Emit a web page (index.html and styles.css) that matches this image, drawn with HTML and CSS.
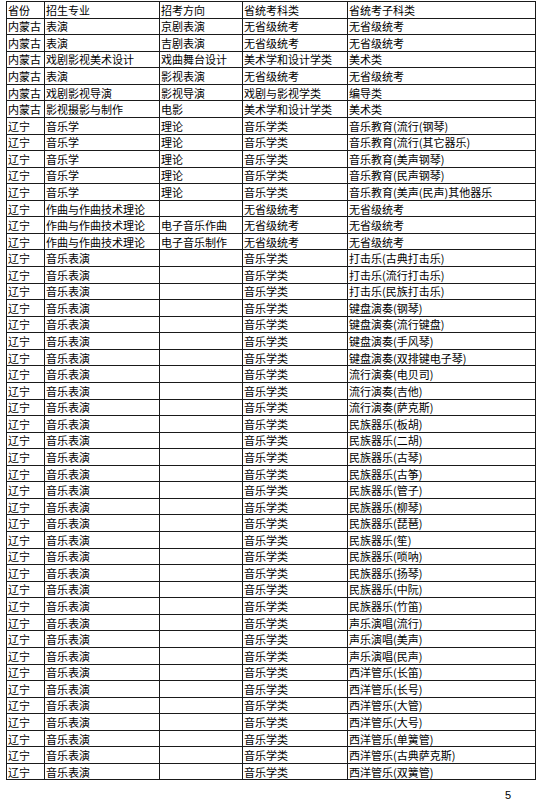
FILE: index.html
```html
<!DOCTYPE html>
<html lang="zh-CN">
<head>
<meta charset="utf-8">
<title>招生专业</title>
<link rel="stylesheet" href="styles.css">
</head>
<body>
<div class="page">
<table class="sheet">
<colgroup>
<col class="c1"><col class="c2"><col class="c3"><col class="c4"><col class="c5">
</colgroup>
<tbody>
<tr><td>省份</td><td>招生专业</td><td>招考方向</td><td>省统考科类</td><td>省统考子科类</td></tr>
<tr><td>内蒙古</td><td>表演</td><td>京剧表演</td><td>无省级统考</td><td>无省级统考</td></tr>
<tr><td>内蒙古</td><td>表演</td><td>吉剧表演</td><td>无省级统考</td><td>无省级统考</td></tr>
<tr><td>内蒙古</td><td>戏剧影视美术设计</td><td>戏曲舞台设计</td><td>美术学和设计学类</td><td>美术类</td></tr>
<tr><td>内蒙古</td><td>表演</td><td>影视表演</td><td>无省级统考</td><td>无省级统考</td></tr>
<tr><td>内蒙古</td><td>戏剧影视导演</td><td>影视导演</td><td>戏剧与影视学类</td><td>编导类</td></tr>
<tr><td>内蒙古</td><td>影视摄影与制作</td><td>电影</td><td>美术学和设计学类</td><td>美术类</td></tr>
<tr><td>辽宁</td><td>音乐学</td><td>理论</td><td>音乐学类</td><td>音乐教育(流行(钢琴)</td></tr>
<tr><td>辽宁</td><td>音乐学</td><td>理论</td><td>音乐学类</td><td>音乐教育(流行(其它器乐)</td></tr>
<tr><td>辽宁</td><td>音乐学</td><td>理论</td><td>音乐学类</td><td>音乐教育(美声钢琴)</td></tr>
<tr><td>辽宁</td><td>音乐学</td><td>理论</td><td>音乐学类</td><td>音乐教育(民声钢琴)</td></tr>
<tr><td>辽宁</td><td>音乐学</td><td>理论</td><td>音乐学类</td><td>音乐教育(美声(民声)其他器乐</td></tr>
<tr><td>辽宁</td><td>作曲与作曲技术理论</td><td></td><td>无省级统考</td><td>无省级统考</td></tr>
<tr><td>辽宁</td><td>作曲与作曲技术理论</td><td>电子音乐作曲</td><td>无省级统考</td><td>无省级统考</td></tr>
<tr><td>辽宁</td><td>作曲与作曲技术理论</td><td>电子音乐制作</td><td>无省级统考</td><td>无省级统考</td></tr>
<tr><td>辽宁</td><td>音乐表演</td><td></td><td>音乐学类</td><td>打击乐(古典打击乐)</td></tr>
<tr><td>辽宁</td><td>音乐表演</td><td></td><td>音乐学类</td><td>打击乐(流行打击乐)</td></tr>
<tr><td>辽宁</td><td>音乐表演</td><td></td><td>音乐学类</td><td>打击乐(民族打击乐)</td></tr>
<tr><td>辽宁</td><td>音乐表演</td><td></td><td>音乐学类</td><td>键盘演奏(钢琴)</td></tr>
<tr><td>辽宁</td><td>音乐表演</td><td></td><td>音乐学类</td><td>键盘演奏(流行键盘)</td></tr>
<tr><td>辽宁</td><td>音乐表演</td><td></td><td>音乐学类</td><td>键盘演奏(手风琴)</td></tr>
<tr><td>辽宁</td><td>音乐表演</td><td></td><td>音乐学类</td><td>键盘演奏(双排键电子琴)</td></tr>
<tr><td>辽宁</td><td>音乐表演</td><td></td><td>音乐学类</td><td>流行演奏(电贝司)</td></tr>
<tr><td>辽宁</td><td>音乐表演</td><td></td><td>音乐学类</td><td>流行演奏(吉他)</td></tr>
<tr><td>辽宁</td><td>音乐表演</td><td></td><td>音乐学类</td><td>流行演奏(萨克斯)</td></tr>
<tr><td>辽宁</td><td>音乐表演</td><td></td><td>音乐学类</td><td>民族器乐(板胡)</td></tr>
<tr><td>辽宁</td><td>音乐表演</td><td></td><td>音乐学类</td><td>民族器乐(二胡)</td></tr>
<tr><td>辽宁</td><td>音乐表演</td><td></td><td>音乐学类</td><td>民族器乐(古琴)</td></tr>
<tr><td>辽宁</td><td>音乐表演</td><td></td><td>音乐学类</td><td>民族器乐(古筝)</td></tr>
<tr><td>辽宁</td><td>音乐表演</td><td></td><td>音乐学类</td><td>民族器乐(管子)</td></tr>
<tr><td>辽宁</td><td>音乐表演</td><td></td><td>音乐学类</td><td>民族器乐(柳琴)</td></tr>
<tr><td>辽宁</td><td>音乐表演</td><td></td><td>音乐学类</td><td>民族器乐(琵琶)</td></tr>
<tr><td>辽宁</td><td>音乐表演</td><td></td><td>音乐学类</td><td>民族器乐(笙)</td></tr>
<tr><td>辽宁</td><td>音乐表演</td><td></td><td>音乐学类</td><td>民族器乐(唢呐)</td></tr>
<tr><td>辽宁</td><td>音乐表演</td><td></td><td>音乐学类</td><td>民族器乐(扬琴)</td></tr>
<tr><td>辽宁</td><td>音乐表演</td><td></td><td>音乐学类</td><td>民族器乐(中阮)</td></tr>
<tr><td>辽宁</td><td>音乐表演</td><td></td><td>音乐学类</td><td>民族器乐(竹笛)</td></tr>
<tr><td>辽宁</td><td>音乐表演</td><td></td><td>音乐学类</td><td>声乐演唱(流行)</td></tr>
<tr><td>辽宁</td><td>音乐表演</td><td></td><td>音乐学类</td><td>声乐演唱(美声)</td></tr>
<tr><td>辽宁</td><td>音乐表演</td><td></td><td>音乐学类</td><td>声乐演唱(民声)</td></tr>
<tr><td>辽宁</td><td>音乐表演</td><td></td><td>音乐学类</td><td>西洋管乐(长笛)</td></tr>
<tr><td>辽宁</td><td>音乐表演</td><td></td><td>音乐学类</td><td>西洋管乐(长号)</td></tr>
<tr><td>辽宁</td><td>音乐表演</td><td></td><td>音乐学类</td><td>西洋管乐(大管)</td></tr>
<tr><td>辽宁</td><td>音乐表演</td><td></td><td>音乐学类</td><td>西洋管乐(大号)</td></tr>
<tr><td>辽宁</td><td>音乐表演</td><td></td><td>音乐学类</td><td>西洋管乐(单簧管)</td></tr>
<tr><td>辽宁</td><td>音乐表演</td><td></td><td>音乐学类</td><td>西洋管乐(古典萨克斯)</td></tr>
<tr><td>辽宁</td><td>音乐表演</td><td></td><td>音乐学类</td><td>西洋管乐(双簧管)</td></tr>
</tbody>
</table>
<div class="page-num">5</div>
</div>
</body>
</html>
```

FILE: styles.css
```css
html, body {
  margin: 0;
  padding: 0;
  background: #ffffff;
}

body {
  font-family: "Noto Sans CJK SC", "Liberation Sans", sans-serif;
  color: #000000;
}

.page {
  width: 540px;
  height: 805px;
  padding: 1px 0 0 6px;
  box-sizing: border-box;
}

.sheet {
  border-collapse: collapse;
  table-layout: fixed;
  width: 529px;
  font-size: 11px;
  line-height: 14px;
}

.c1 { width: 38px; }
.c2 { width: 115px; }
.c3 { width: 83px; }
.c4 { width: 105px; }
.c5 { width: 188px; }

.sheet tr {
  height: 16.57px;
}

.sheet td {
  border: 1px solid #1a1a1a;
  padding: 0 0 0 1px;
  white-space: nowrap;
  overflow: hidden;
  vertical-align: middle;
}

.page-num {
  width: 505px;
  margin-top: 9px;
  text-align: right;
  font-family: "Liberation Sans", sans-serif;
  font-size: 11px;
  line-height: 12px;
}
```
